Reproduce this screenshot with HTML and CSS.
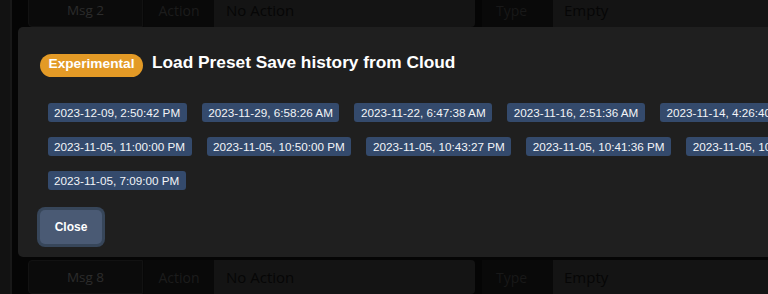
FILE: index.html
```html
<!DOCTYPE html>
<html>
<head>
<meta charset="utf-8">
<link rel="stylesheet" href="styles.css">
</head>
<body>
<div class="page">
  <div class="rail"></div>
  <div class="rows">
    <div class="row"><div class="msg">Msg 2</div><div class="lbl">Action</div><div class="val">No Action</div><div class="lbl type">Type</div><div class="val wide">Empty</div></div>
    <div class="row"><div class="msg">Msg 8</div><div class="lbl">Action</div><div class="val">No Action</div><div class="lbl type">Type</div><div class="val wide">Empty</div></div>
  </div>
</div>

<div class="modal">
  <div class="head">
    <span class="badge">Experimental</span>
    <h2 class="title">Load Preset Save history from Cloud</h2>
  </div>
  <div class="chips">
    <span class="chip">2023-12-09, 2:50:42 PM</span>
    <span class="chip">2023-11-29, 6:58:26 AM</span>
    <span class="chip">2023-11-22, 6:47:38 AM</span>
    <span class="chip">2023-11-16, 2:51:36 AM</span>
    <span class="chip">2023-11-14, 4:26:40 AM</span>
    <span class="chip">2023-11-06, 9:12:05 AM</span>
    <span class="chip">2023-11-05, 11:00:00 PM</span>
    <span class="chip">2023-11-05, 10:50:00 PM</span>
    <span class="chip">2023-11-05, 10:43:27 PM</span>
    <span class="chip">2023-11-05, 10:41:36 PM</span>
    <span class="chip">2023-11-05, 10:30:12 PM</span>
    <span class="chip">2023-11-05, 9:45:00 PM</span>
    <span class="chip">2023-11-05, 7:09:00 PM</span>
  </div>
  <button class="close">Close</button>
</div>
</body>
</html>
```

FILE: styles.css
```css
html, body {
  margin: 0;
  padding: 0;
  height: 100%;
  overflow: hidden;
}
body {
  background: #050505;
  font-family: "Liberation Sans", Arial, sans-serif;
}

/* background page (dimmed) */
.page {
  display: flex;
  height: 100%;
}
.rail {
  width: 10px;
  flex: none;
  background: #121212;
  border-right: 2px solid #181818;
}
.rows {
  flex: 1;
  display: flex;
  flex-direction: column;
  justify-content: space-between;
  margin-top: -7px;
  padding-left: 16px;
  min-width: 0;
}
.row {
  display: flex;
  height: 34px;
  flex: none;
  font-family: "Open Sans", "Noto Sans", sans-serif;
}
.msg {
  width: 115px;
  flex: none;
  box-sizing: border-box;
  background: #0b0b0b;
  border: 1px solid #121212;
  border-radius: 4px 0 0 4px;
  color: #2c2c2c;
  font-size: 13.5px;
  display: flex;
  align-items: center;
  justify-content: center;
}
.lbl {
  width: 71px;
  flex: none;
  box-sizing: border-box;
  background: #090909;
  border-left: 1px solid #070707;
  color: #1c1c1c;
  font-size: 14px;
  display: flex;
  align-items: center;
  justify-content: center;
}
.val {
  width: 261px;
  flex: none;
  box-sizing: border-box;
  background: #141414;
  border-radius: 0 4px 4px 0;
  color: #060606;
  font-size: 15px;
  padding-left: 12px;
  display: flex;
  align-items: center;
}
.lbl.type {
  width: 77px;
  margin-left: 1px;
  border-left: 6px solid #050505;
  justify-content: flex-start;
  padding-left: 14px;
  color: #181818;
}
.val.wide {
  width: auto;
  flex: 1;
  border-radius: 0;
  padding-left: 11px;
}

/* modal */
.modal {
  position: fixed;
  left: 18px;
  top: 27px;
  width: 1050px;
  box-sizing: border-box;
  background: #1f1f1f;
  border-radius: 5px;
  padding: 27px 22px 13px;
}
.head {
  display: flex;
  align-items: flex-start;
  gap: 9px;
  height: 23px;
  margin-bottom: 18.5px;
}
.badge {
  background: #e39a26;
  color: #fff;
  font-weight: bold;
  font-size: 13.7px;
  line-height: 19px;
  padding: 0 8.5px 4px;
  border-radius: 12px;
}
.title {
  margin: 0;
  color: #fff;
  font-size: 17.3px;
  font-weight: bold;
  line-height: 17px;
}
.chips {
  display: flex;
  flex-wrap: wrap;
  width: 1000px;
}
.chip {
  margin: 7.3px 7.5px;
  height: 19.4px;
  line-height: 19.4px;
  padding: 0 6.6px;
  background: #344a6c;
  color: #f2f4f7;
  font-size: 11.7px;
  border-radius: 3px;
}
.close {
  display: block;
  margin-top: 12.5px;
  width: 62px;
  height: 34px;
  border: none;
  border-radius: 5px;
  background: #4a5a74;
  color: #fff;
  font-family: "Liberation Sans", Arial, sans-serif;
  font-weight: bold;
  font-size: 12px;
  box-shadow: 0 0 0 3px #37465a;
  padding: 0;
}
```
